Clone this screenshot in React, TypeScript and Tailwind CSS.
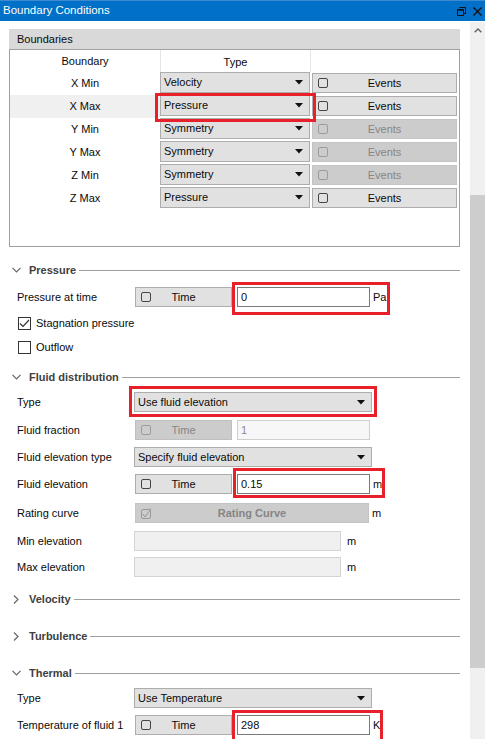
import React from 'react';

type Row = { name: string; type: string; events: boolean; selected?: boolean };

const rows: Row[] = [
  { name: 'X Min', type: 'Velocity', events: true },
  { name: 'X Max', type: 'Pressure', events: true, selected: true },
  { name: 'Y Min', type: 'Symmetry', events: false },
  { name: 'Y Max', type: 'Symmetry', events: false },
  { name: 'Z Min', type: 'Symmetry', events: false },
  { name: 'Z Max', type: 'Pressure', events: true },
];

const MiniBox = ({ dim }: { dim?: boolean }) => (
  <span
    className={
      dim
        ? 'block w-[10px] h-[10px] shrink-0 rounded-[2px] border border-[#9c9c9c]'
        : 'block w-[10px] h-[10px] shrink-0 rounded-[2px] border border-[#454545]'
    }
  />
);

const Arrow = () => (
  <svg width="8" height="5" viewBox="0 0 8 5" className="shrink-0">
    <path d="M0 0h8L4 4.5z" fill="#111" />
  </svg>
);

const Combo = ({ value, className }: { value: string; className: string }) => (
  <div className={`flex items-center justify-between border border-[#adadad] bg-[#e1e1e1] pl-[3px] pr-[6px] ${className}`}>
    <span>{value}</span>
    <Arrow />
  </div>
);

const TimeButton = ({ dim }: { dim?: boolean }) => (
  <div
    className={
      dim
        ? 'ml-[1px] flex h-[20px] w-[97px] items-center border border-[#bfbfbf] bg-[#cccccc] pl-[5px] text-[#858585]'
        : 'ml-[1px] flex h-[20px] w-[97px] items-center border border-[#adadad] bg-[#e1e1e1] pl-[5px]'
    }
  >
    <MiniBox dim={dim} />
    <span className="flex-1 pr-[15px] text-center">Time</span>
  </div>
);

const TextBox = ({ value, dim }: { value: string; dim?: boolean }) => (
  <div
    className={
      dim
        ? 'ml-[5px] flex h-[20px] w-[133px] items-center border border-[#cfcfcf] bg-[#f7f7f7] pl-[3px] text-[#8a8a8a]'
        : 'ml-[5px] flex h-[20px] w-[133px] items-center border border-[#7a7a7a] bg-white pl-[3px]'
    }
  >
    {value}
  </div>
);

const Section = ({ title, open, className }: { title: string; open: boolean; className: string }) => (
  <div className={`flex h-[14px] items-center pl-[12px] ${className}`}>
    {open ? (
      <svg width="9" height="6" viewBox="0 0 9 6" className="shrink-0">
        <path d="M0.5 0.8L4.5 4.8L8.5 0.8" fill="none" stroke="#666" strokeWidth="1.2" />
      </svg>
    ) : (
      <svg width="9" height="9" viewBox="0 0 9 9" className="shrink-0">
        <path d="M2 0.5L6 4.5L2 8.5" fill="none" stroke="#666" strokeWidth="1.2" />
      </svg>
    )}
    <span className="ml-[8px] font-bold text-[#404040]">{title}</span>
    <span className="ml-[3px] h-px flex-1 bg-[#a0a0a0]" />
  </div>
);

const Label = ({ children }: { children: React.ReactNode }) => (
  <span className="w-[117px] shrink-0">{children}</span>
);

const TimeRow = ({ label, value, unit, dim, className }: { label: string; value: string; unit?: string; dim?: boolean; className: string }) => (
  <div className={`flex h-[20px] items-center pl-[17px] ${className}`}>
    <Label>{label}</Label>
    <TimeButton dim={dim} />
    <TextBox value={value} dim={dim} />
    {unit && <span className="ml-[3px]">{unit}</span>}
  </div>
);

const RedBox = ({ className }: { className: string }) => (
  <div className={`pointer-events-none absolute border-[3px] border-[#e8202a] ${className}`} />
);

const App: React.FC = () => {
  return (
    <div className="h-[739px] w-[485px] overflow-hidden bg-white text-[11px] text-[#0a0a0a] [font-family:'Liberation_Sans',Arial,sans-serif]">
      <div className="flex h-[21px] items-center justify-between border-t border-[#3d8ad0] bg-[#0070c8] pl-[3px] pr-[3px] text-white">
        <span className="text-[11.5px]">Boundary Conditions</span>
        <div className="flex items-center gap-[7px]">
          <svg width="9" height="9" viewBox="0 0 9 9">
            <path d="M2.5 0.5h6v6h-2M0.5 2.5h6v6h-6z" fill="none" stroke="#111" strokeWidth="1" />
            <path d="M0.5 3h6" stroke="#111" strokeWidth="1.5" />
          </svg>
          <svg width="9" height="9" viewBox="0 0 9 9">
            <path d="M0.5 0.5l8 8M8.5 0.5l-8 8" stroke="#111" strokeWidth="1.4" />
          </svg>
        </div>
      </div>

      <div className="mt-[1px] flex">
        <div className="relative w-[470px] shrink-0 pr-[10px]">
          <div className="ml-[9px] mt-[7px]">
            <div className="flex h-[20px] items-center bg-[#d9d9d9] pl-[8px]">Boundaries</div>
            <div className="h-[198px] border border-[#a0a0a0] bg-white">
              <div className="grid h-[22px] grid-cols-[150px_150px_1fr] items-center">
                <span className="text-center">Boundary</span>
                <span className="h-full border-l border-[#e5e5e5] pt-[4px] text-center">Type</span>
                <span className="h-full border-l border-[#e5e5e5]" />
              </div>
              {rows.map((r) => (
                <div key={r.name} className="grid h-[23px] grid-cols-[150px_150px_1fr]">
                  <span className={r.selected ? 'flex items-center justify-center bg-[#f0f0f0]' : 'flex items-center justify-center'}>
                    {r.name}
                  </span>
                  <Combo value={r.type} className="h-[21px]" />
                  <div
                    className={
                      r.events
                        ? 'ml-[2px] mr-[2px] mt-[1px] flex h-[20px] items-center border border-[#adadad] bg-[#e1e1e1] pl-[5px]'
                        : 'ml-[2px] mr-[2px] mt-[1px] flex h-[20px] items-center border border-[#c4c4c4] bg-[#cccccc] pl-[5px] text-[#868686]'
                    }
                  >
                    <MiniBox dim={!r.events} />
                    <span className="flex-1 pr-[15px] text-center">Events</span>
                  </div>
                </div>
              ))}
            </div>
          </div>

          <Section title="Pressure" open className="mt-[16px]" />
          <TimeRow label="Pressure at time" value="0" unit="Pa" className="mt-[10px]" />
          <div className="mt-[10px] flex h-[13px] items-center pl-[18px]">
            <span className="flex h-[13px] w-[13px] items-center justify-center border border-[#333] bg-white">
              <svg width="11" height="9" viewBox="0 0 11 9">
                <path d="M1 4.5L4 7.5L10 1" fill="none" stroke="#333" strokeWidth="1.2" />
              </svg>
            </span>
            <span className="ml-[5px]">Stagnation pressure</span>
          </div>
          <div className="mt-[11px] flex h-[13px] items-center pl-[18px]">
            <span className="h-[13px] w-[13px] border border-[#333] bg-white" />
            <span className="ml-[5px]">Outflow</span>
          </div>

          <Section title="Fluid distribution" open className="mt-[16px]" />
          <div className="mt-[8px] flex h-[20px] items-center pl-[17px]">
            <Label>Type</Label>
            <Combo value="Use fluid elevation" className="h-[20px] w-[238px]" />
          </div>
          <TimeRow label="Fluid fraction" value="1" dim className="mt-[8px]" />
          <div className="mt-[7px] flex h-[20px] items-center pl-[17px]">
            <Label>Fluid elevation type</Label>
            <Combo value="Specify fluid elevation" className="h-[20px] w-[238px]" />
          </div>
          <TimeRow label="Fluid elevation" value="0.15" unit="m" className="mt-[7px]" />
          <div className="mt-[9px] flex h-[20px] items-center pl-[17px]">
            <Label>Rating curve</Label>
            <div className="ml-[1px] flex h-[20px] w-[234px] items-center border border-[#c4c4c4] bg-[#cccccc] pl-[5px] font-bold text-[#858585]">
              <svg width="11" height="11" viewBox="0 0 11 11" className="shrink-0">
                <rect x="0.5" y="1.5" width="9" height="9" rx="1.5" fill="none" stroke="#9a9a9a" />
                <path d="M2 6L4 9L10 0.5" fill="none" stroke="#9a9a9a" strokeWidth="1" />
              </svg>
              <span className="flex-1 pr-[16px] text-center">Rating Curve</span>
            </div>
            <span className="ml-[3px]">m</span>
          </div>
          <div className="mt-[8px] flex h-[20px] items-center pl-[17px]">
            <Label>Min elevation</Label>
            <div className="h-[20px] w-[207px] border border-[#d4d4d4] bg-[#f0f0f0]" />
            <span className="ml-[6px]">m</span>
          </div>
          <div className="mt-[6px] flex h-[20px] items-center pl-[17px]">
            <Label>Max elevation</Label>
            <div className="h-[20px] w-[207px] border border-[#d4d4d4] bg-[#f0f0f0]" />
            <span className="ml-[6px]">m</span>
          </div>

          <Section title="Velocity" open={false} className="mt-[15px]" />
          <Section title="Turbulence" open={false} className="mt-[23px]" />
          <Section title="Thermal" open className="mt-[23px]" />
          <div className="mt-[8px] flex h-[20px] items-center pl-[17px]">
            <Label>Type</Label>
            <Combo value="Use Temperature" className="h-[20px] w-[238px]" />
          </div>
          <TimeRow label="Temperature of fluid 1" value="298" unit="K" className="mt-[7px]" />

          <RedBox className="left-[155px] top-[71px] h-[29px] w-[161px]" />
          <RedBox className="left-[232px] top-[260px] h-[33px] w-[158px]" />
          <RedBox className="left-[129px] top-[364px] h-[31px] w-[248px]" />
          <RedBox className="left-[233px] top-[446px] h-[30px] w-[152px]" />
          <RedBox className="left-[232px] top-[688px] h-[40px] w-[151px]" />
        </div>

        <div className="flex h-[718px] w-[15px] flex-col bg-[#f0f0f0]">
          <div className="flex h-[17px] items-center justify-center">
            <svg width="8" height="5" viewBox="0 0 8 5">
              <path d="M0.7 4.3L4 1L7.3 4.3" fill="none" stroke="#606060" strokeWidth="1.4" />
            </svg>
          </div>
          <div className="mt-[156px] h-[473px] w-full bg-[#cdcdcd]" />
        </div>
      </div>
    </div>
  );
};

export default App;
